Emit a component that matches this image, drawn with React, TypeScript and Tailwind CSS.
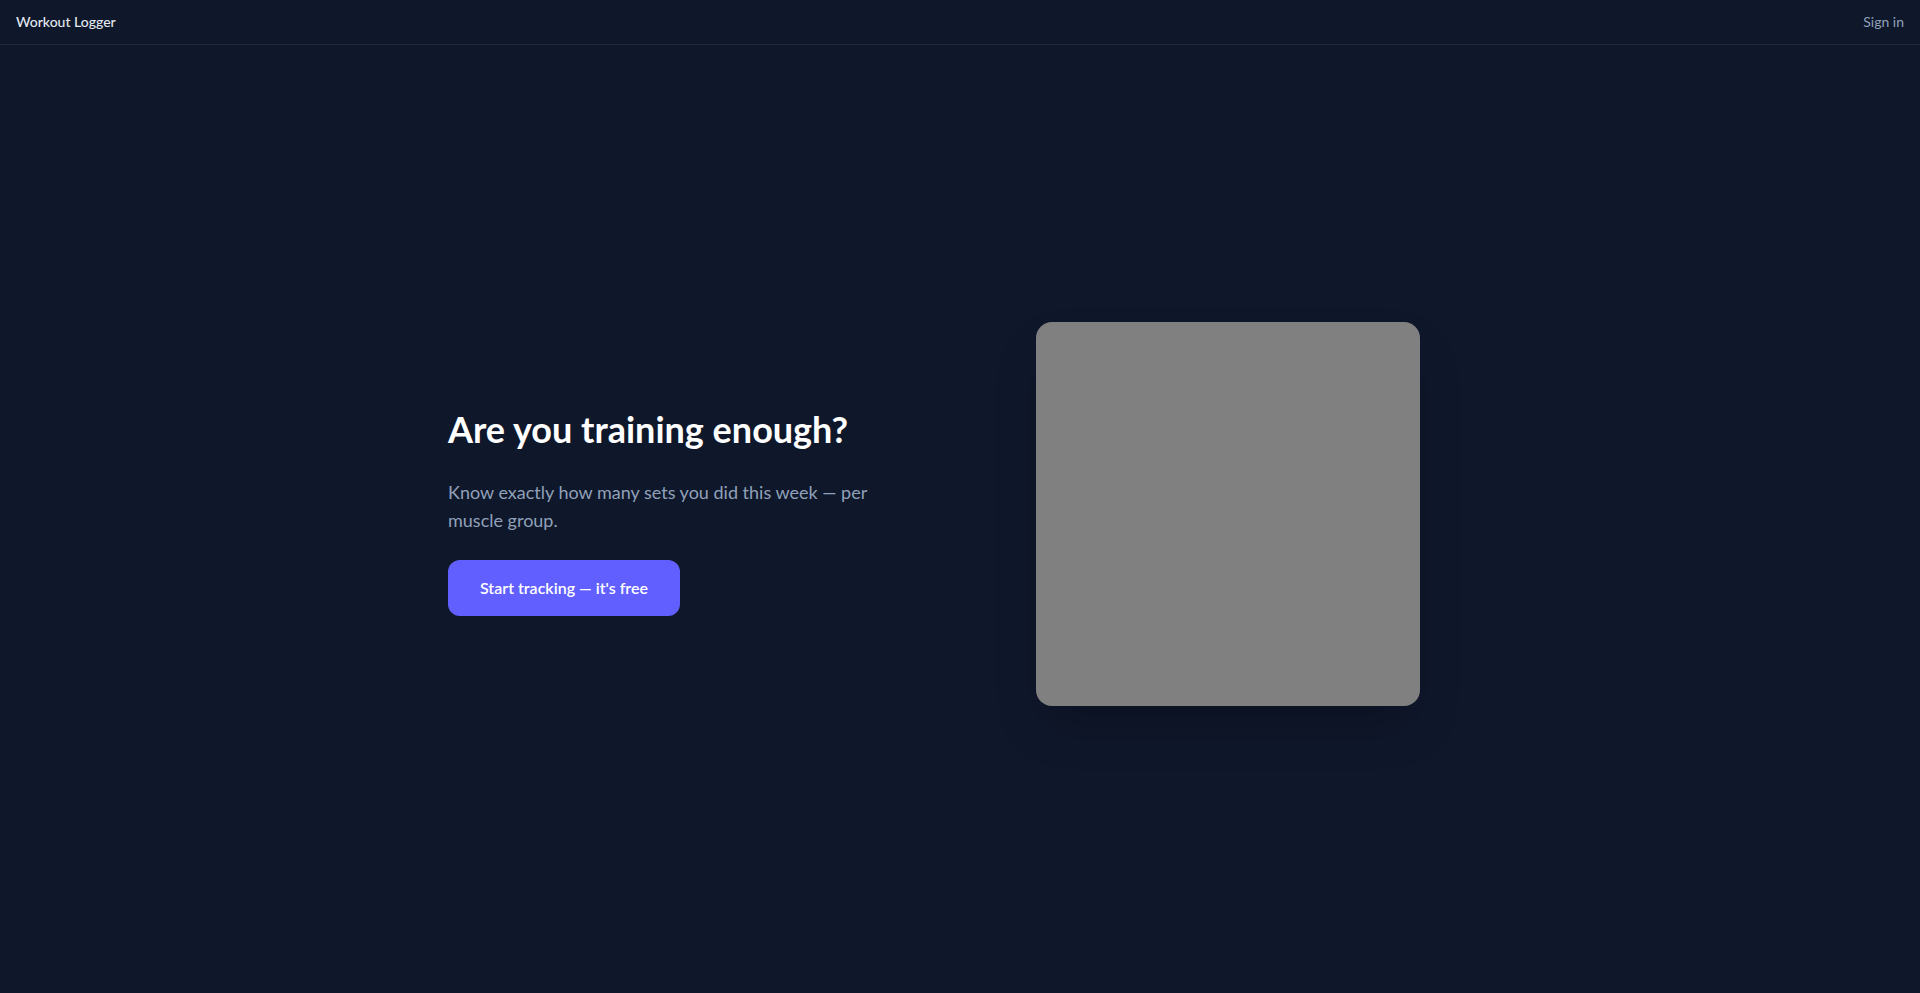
export default function App() {
  return (
    <div className="min-h-screen flex flex-col bg-slate-900 text-slate-100 font-['Lato','Noto_Sans',sans-serif]">
      <header className="flex items-center justify-between px-4 py-3 border-b border-slate-800">
        <span className="text-sm font-medium text-slate-200">Workout Logger</span>
        <a href="#" className="text-sm text-slate-400">Sign in</a>
      </header>

      <main className="flex-1 flex items-center pb-[10px]">
        <div className="mx-auto w-full max-w-6xl px-16 grid grid-cols-2 gap-12 items-center">
          <div className="pb-[3px]">
            <h1 className="text-4xl font-bold text-white">Are you training enough?</h1>
            <p className="mt-[29px] max-w-md text-lg text-slate-400">
              Know exactly how many sets you did this week — per muscle group.
            </p>
            <button className="mt-[26px] px-8 py-4 rounded-xl bg-indigo-500 text-base font-semibold text-white">
              Start tracking — it's free
            </button>
          </div>
          <div className="flex justify-center">
            <div className="w-96 h-96 rounded-2xl bg-[#808080] shadow-2xl" />
          </div>
        </div>
      </main>
    </div>
  );
}
